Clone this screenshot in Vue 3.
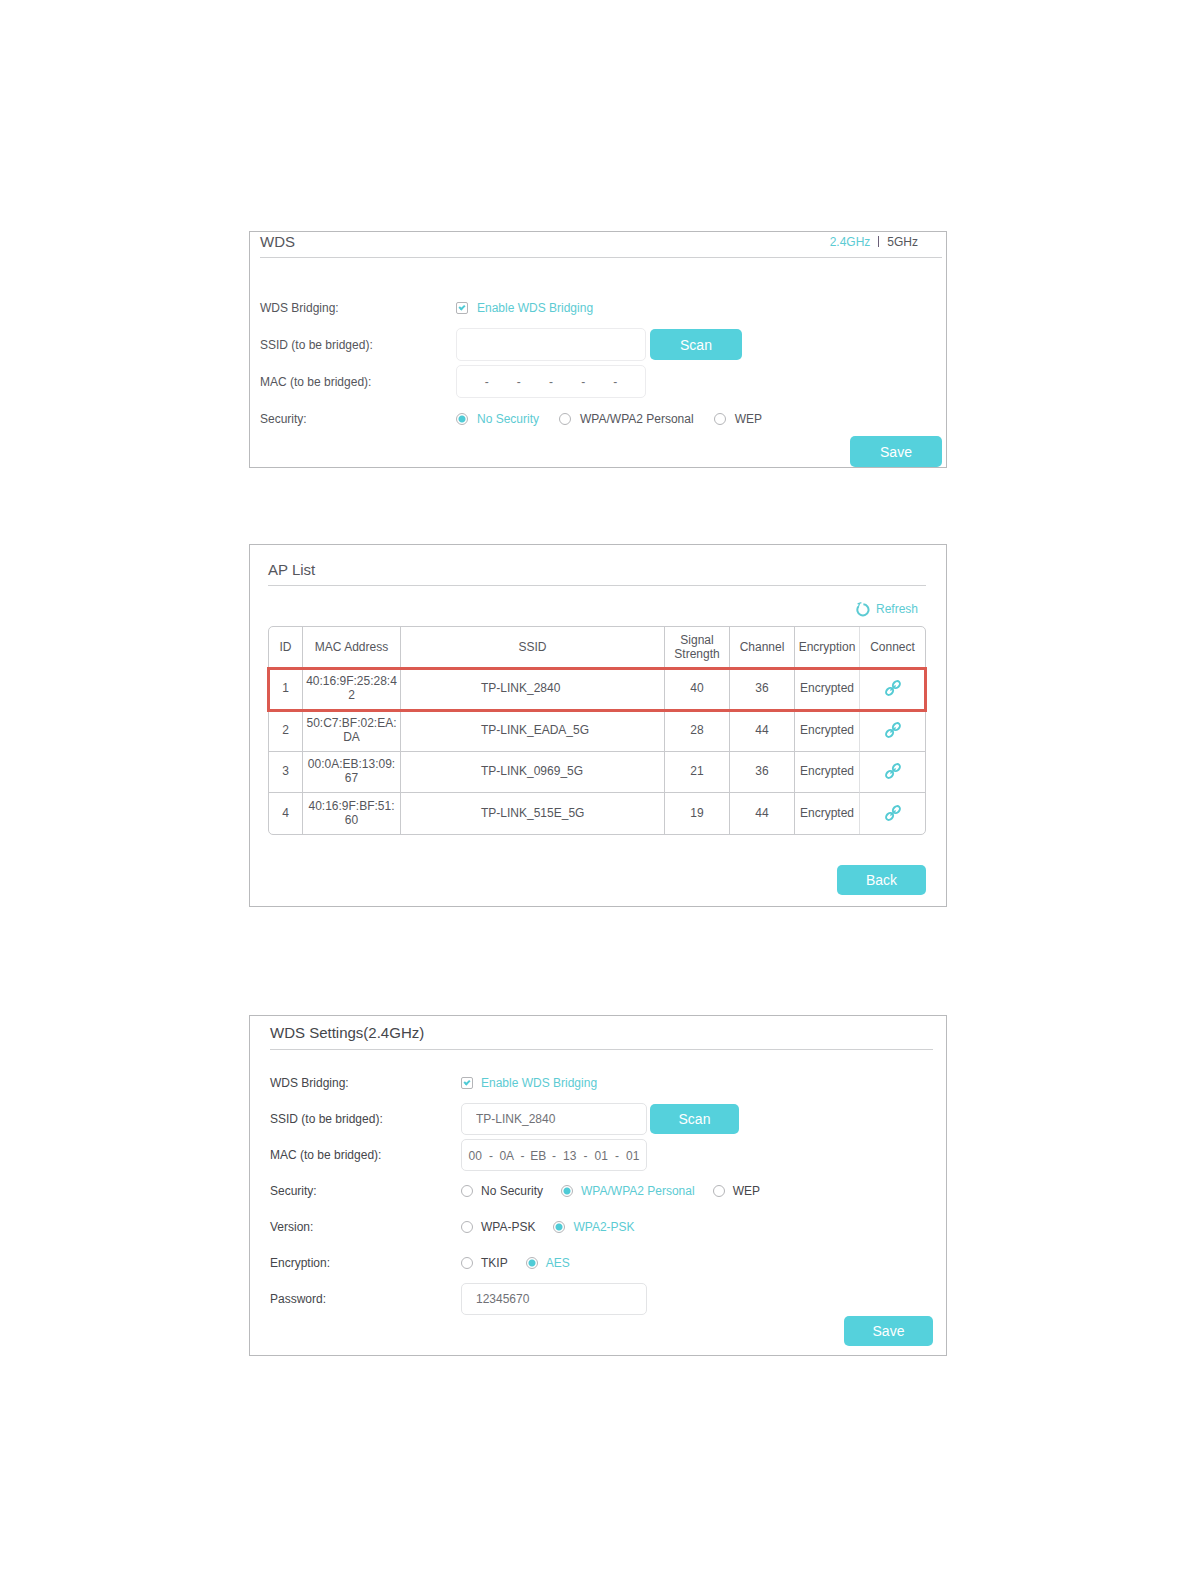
<script setup>
import { reactive, ref } from 'vue'

const band = ref('2.4GHz')
const bands = ['2.4GHz', '5GHz']

const bridge = reactive({
  enabled: true,
  ssid: '',
  mac: ['', '', '', '', '', ''],
  security: 'No Security',
})

const settings = reactive({
  enabled: true,
  ssid: 'TP-LINK_2840',
  mac: ['00', '0A', 'EB', '13', '01', '01'],
  security: 'WPA/WPA2 Personal',
  version: 'WPA2-PSK',
  encryption: 'AES',
  password: '12345670',
})

const securityModes = ['No Security', 'WPA/WPA2 Personal', 'WEP']
const versions = ['WPA-PSK', 'WPA2-PSK']
const encryptions = ['TKIP', 'AES']

const accessPoints = [
  { id: 1, mac: '40:16:9F:25:28:42', ssid: 'TP-LINK_2840', signal: 40, channel: 36 },
  { id: 2, mac: '50:C7:BF:02:EA:DA', ssid: 'TP-LINK_EADA_5G', signal: 28, channel: 44 },
  { id: 3, mac: '00:0A:EB:13:09:67', ssid: 'TP-LINK_0969_5G', signal: 21, channel: 36 },
  { id: 4, mac: '40:16:9F:BF:51:60', ssid: 'TP-LINK_515E_5G', signal: 19, channel: 44 },
]
const selectedId = ref(1)
</script>

<template>
  <main class="page">
    <section class="panel bridge">
      <header class="head">
        <h2>WDS</h2>
        <nav class="bands">
          <template v-for="(b, i) in bands" :key="b">
            <span v-if="i" class="divider"></span>
            <a href="#" :class="{ on: band === b }" @click.prevent="band = b">{{ b }}</a>
          </template>
        </nav>
      </header>
      <form class="form" @submit.prevent>
        <div class="row">
          <span class="name">WDS Bridging:</span>
          <label class="choice" :class="{ on: bridge.enabled }">
            <input v-model="bridge.enabled" type="checkbox" />Enable WDS Bridging
          </label>
        </div>
        <div class="row">
          <label class="name" for="bridge-ssid">SSID (to be bridged):</label>
          <input id="bridge-ssid" v-model="bridge.ssid" class="box" type="text" />
          <button type="button" class="btn scan">Scan</button>
        </div>
        <div class="row">
          <label class="name" for="bridge-mac-0">MAC (to be bridged):</label>
          <div class="box mac">
            <template v-for="(part, i) in bridge.mac" :key="i">
              <span v-if="i" class="dash">-</span>
              <input :id="`bridge-mac-${i}`" v-model="bridge.mac[i]" type="text" maxlength="2" :aria-label="`MAC byte ${i + 1}`" />
            </template>
          </div>
        </div>
        <div class="row">
          <span class="name">Security:</span>
          <div class="choices">
            <label v-for="m in securityModes" :key="m" class="choice" :class="{ on: bridge.security === m }">
              <input v-model="bridge.security" type="radio" name="bridge-security" :value="m" />{{ m }}
            </label>
          </div>
        </div>
        <button type="submit" class="btn submit">Save</button>
      </form>
    </section>

    <section class="panel list">
      <header class="head">
        <h2>AP List</h2>
      </header>
      <div class="tools">
        <button type="button" class="refresh">
          <svg width="14" height="16" viewBox="0 0 14 16" fill="none" stroke="currentColor" aria-hidden="true">
            <path d="M7.4 3.2A5.6 5.6 0 1 1 2.4 5.5" stroke-width="2" />
            <path d="M2.2 6.2L3.6 2.6M1.6 2.9L5.4 1.6" stroke-width="1.2" />
          </svg>
          Refresh
        </button>
      </div>
      <table>
        <colgroup>
          <col class="c-id" />
          <col class="c-mac" />
          <col />
          <col class="c-num" />
          <col class="c-num" />
          <col class="c-num" />
          <col class="c-link" />
        </colgroup>
        <thead>
          <tr>
            <th>ID</th>
            <th>MAC Address</th>
            <th>SSID</th>
            <th>Signal Strength</th>
            <th>Channel</th>
            <th>Encryption</th>
            <th>Connect</th>
          </tr>
        </thead>
        <tbody>
          <tr v-for="ap in accessPoints" :key="ap.id" :class="{ selected: ap.id === selectedId }">
            <td>{{ ap.id }}</td>
            <td class="address">{{ ap.mac }}</td>
            <td class="ssid">{{ ap.ssid }}</td>
            <td>{{ ap.signal }}</td>
            <td>{{ ap.channel }}</td>
            <td>Encrypted</td>
            <td>
              <button type="button" class="connect" :aria-label="`Connect to ${ap.ssid}`" @click="selectedId = ap.id">
                <svg width="16" height="16" viewBox="0 0 16 16" fill="none" stroke="currentColor" aria-hidden="true">
                  <ellipse cx="4.6" cy="11.4" rx="3.9" ry="3" transform="rotate(-45 4.6 11.4)" stroke-width="2" />
                  <ellipse cx="11.4" cy="4.6" rx="3.9" ry="3" transform="rotate(-45 11.4 4.6)" stroke-width="2" />
                  <path d="M5.4 10.6l5.2-5.2" stroke-width="1.4" />
                </svg>
              </button>
            </td>
          </tr>
        </tbody>
      </table>
      <button type="button" class="btn submit">Back</button>
    </section>

    <section class="panel settings">
      <header class="head">
        <h2>WDS Settings(2.4GHz)</h2>
      </header>
      <form class="form" @submit.prevent>
        <div class="row">
          <span class="name">WDS Bridging:</span>
          <label class="choice" :class="{ on: settings.enabled }">
            <input v-model="settings.enabled" type="checkbox" />Enable WDS Bridging
          </label>
        </div>
        <div class="row">
          <label class="name" for="set-ssid">SSID (to be bridged):</label>
          <input id="set-ssid" v-model="settings.ssid" class="box" type="text" />
          <button type="button" class="btn scan">Scan</button>
        </div>
        <div class="row">
          <label class="name" for="set-mac-0">MAC (to be bridged):</label>
          <div class="box mac">
            <template v-for="(part, i) in settings.mac" :key="i">
              <span v-if="i" class="dash">-</span>
              <input :id="`set-mac-${i}`" v-model="settings.mac[i]" type="text" maxlength="2" :aria-label="`MAC byte ${i + 1}`" />
            </template>
          </div>
        </div>
        <div class="row">
          <span class="name">Security:</span>
          <div class="choices">
            <label v-for="m in securityModes" :key="m" class="choice" :class="{ on: settings.security === m }">
              <input v-model="settings.security" type="radio" name="set-security" :value="m" />{{ m }}
            </label>
          </div>
        </div>
        <div class="row">
          <span class="name">Version:</span>
          <div class="choices">
            <label v-for="v in versions" :key="v" class="choice" :class="{ on: settings.version === v }">
              <input v-model="settings.version" type="radio" name="set-version" :value="v" />{{ v }}
            </label>
          </div>
        </div>
        <div class="row">
          <span class="name">Encryption:</span>
          <div class="choices">
            <label v-for="e in encryptions" :key="e" class="choice" :class="{ on: settings.encryption === e }">
              <input v-model="settings.encryption" type="radio" name="set-encryption" :value="e" />{{ e }}
            </label>
          </div>
        </div>
        <div class="row">
          <label class="name" for="set-password">Password:</label>
          <input id="set-password" v-model="settings.password" class="box" type="text" />
        </div>
        <button type="submit" class="btn submit">Save</button>
      </form>
    </section>
  </main>
</template>

<style>
body {
  margin: 0;
  background: #fff;
}
</style>

<style scoped>
* {
  box-sizing: border-box;
}

.page {
  display: flex;
  flex-direction: column;
  align-items: center;
  padding: 231px 24px 120px;
  font: 12px/14px "Liberation Sans", Arial, sans-serif;
  color: #55565c;
}

button,
input {
  font: inherit;
  color: inherit;
}

.panel {
  width: 100%;
  max-width: 698px;
  border: 1px solid #b9babc;
}

.head {
  display: flex;
  align-items: center;
  justify-content: space-between;
  border-bottom: 1px solid #d0d1d3;
}

h2 {
  margin: 0;
  font-size: 15px;
  line-height: 18px;
  font-weight: 400;
}

.form,
.list {
  display: flex;
  flex-direction: column;
}

.form {
  gap: 4px;
}

.row {
  display: flex;
  align-items: center;
  height: var(--row);
}

.name {
  flex: 0 0 var(--label);
}

.box {
  width: var(--field);
  height: var(--row);
  margin: 0;
  padding: 0 14px;
  border: 1px solid var(--field-line);
  border-radius: 5px;
  background: #fff;
  color: #707176;
  outline: none;
}

.mac {
  display: flex;
  align-items: center;
  padding: 1px 0 0;
}

.mac input {
  flex: 1;
  min-width: 0;
  padding: 0;
  border: 0;
  background: none;
  text-align: center;
  outline: none;
}

.dash {
  width: 5px;
  text-align: center;
}

.choices {
  display: flex;
  gap: var(--choices-gap);
}

.choice {
  display: flex;
  align-items: center;
  gap: var(--choice-gap);
}

.on {
  color: #5ccbd3;
}

.choice input {
  appearance: none;
  flex: none;
  width: 12px;
  height: 12px;
  margin: 0;
  border: 1px solid #b4b5b8;
  background: #fff center / 100% no-repeat;
}

.choice input[type='radio'] {
  border-radius: 50%;
}

.choice input[type='radio']:checked {
  background-image: radial-gradient(circle, #4fcbd6 3px, transparent 4px);
}

.choice input[type='checkbox'] {
  position: relative;
  border-radius: 2px;
}

.choice input[type='checkbox']:checked::after {
  content: '';
  position: absolute;
  left: 2px;
  top: 2px;
  width: 4px;
  height: 2px;
  border: solid #4fcbd6;
  border-width: 0 0 2px 2px;
  transform: rotate(-45deg);
}

.btn {
  width: var(--btn);
  height: var(--btn-h);
  padding: 0;
  border: 0;
  border-radius: 5px;
  background: #55d1dc;
  color: #fff;
  font-size: 14px;
}

.scan {
  margin-left: 4px;
}

.submit {
  align-self: flex-end;
}

.bridge {
  --row: 33px;
  --label: 196px;
  --field: 190px;
  --field-line: #ececee;
  --choices-gap: 20px;
  --choice-gap: 9px;
  --btn: 92px;
  --btn-h: 31px;
  padding: 0 4px 0 10px;
}

.bridge .head {
  height: 26px;
  padding: 0 24px 6px 0;
  margin-bottom: 33px;
}

.form .submit {
  margin-top: -3px;
}

.bands {
  display: flex;
  align-items: center;
  gap: 8px;
}

.bands a {
  text-decoration: none;
}

.bands a:not(.on) {
  color: #55565c;
}

.divider {
  width: 1px;
  height: 11px;
  background: #6b5f78;
}

.list {
  --btn: 89px;
  --btn-h: 30px;
  margin-top: 76px;
  padding: 0 20px 11px 18px;
}

.list .head {
  height: 41px;
  padding-top: 10px;
}

.tools {
  display: flex;
  justify-content: flex-end;
  align-items: center;
  height: 40px;
  padding: 6px 8px 0 0;
}

.refresh {
  display: flex;
  align-items: center;
  gap: 6px;
  padding: 0;
  border: 0;
  background: none;
  color: #5ccbd3;
}

table {
  width: 100%;
  table-layout: fixed;
  border: 1px solid #c9cacd;
  border-radius: 5px;
  border-collapse: separate;
  border-spacing: 0;
  text-align: center;
}

.c-id {
  width: 34px;
}

.c-mac {
  width: 98px;
}

.c-num,
.c-link {
  width: 65px;
}

th,
td {
  height: 42px;
  padding: 0 3px 2px;
  border: solid #c9cacd;
  border-width: 0 1px 1px 0;
  font-weight: 400;
}

tbody tr:nth-child(odd) td {
  height: 41px;
}

th:last-child,
td:last-child {
  border-right: 0;
}

th:nth-child(6),
td:nth-child(6) {
  border-right-color: #e0e1e3;
}

tbody tr:last-child td {
  height: 41px;
  border-bottom: 0;
}

.address {
  overflow-wrap: anywhere;
}

td.ssid {
  padding-left: 80px;
  text-align: left;
  white-space: nowrap;
}

.selected {
  outline: 3px solid #db5a50;
  outline-offset: -1px;
}

.connect {
  display: block;
  margin: 0 auto;
  padding: 0;
  border: 0;
  background: none;
  color: #55cbd4;
}

.connect svg {
  display: block;
}

.list .submit {
  margin-top: 30px;
}

.settings {
  --row: 32px;
  --label: 191px;
  --field: 186px;
  --field-line: #e3e4e6;
  --choices-gap: 18px;
  --choice-gap: 8px;
  --btn: 89px;
  --btn-h: 30px;
  margin-top: 108px;
  padding: 0 13px 9px 20px;
  color: #45464b;
}

.settings .scan {
  margin-left: 3px;
}

.settings .head {
  height: 34px;
  margin-bottom: 17px;
}
</style>
